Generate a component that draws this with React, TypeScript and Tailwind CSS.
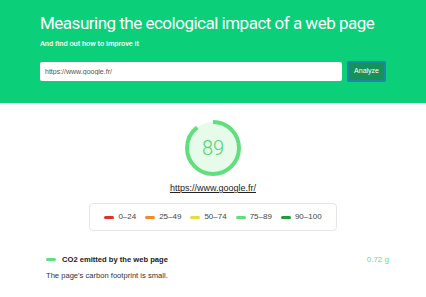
const LEGEND = [
  { label: '0–24', color: 'bg-[#e0312c]' },
  { label: '25–49', color: 'bg-[#f28a2e]' },
  { label: '50–74', color: 'bg-[#e8dc3a]' },
  { label: '75–89', color: 'bg-[#5fe07c]' },
  { label: '90–100', color: 'bg-[#1e9e3a]' },
]

function ScoreGauge({ score }: { score: number }) {
  const r = 26
  const c = 2 * Math.PI * r
  return (
    <div className="relative w-[58px] h-[58px]">
      <svg width="58" height="58" viewBox="0 0 58 58" className="-rotate-90">
        <circle cx="29" cy="29" r={r} fill="#e6fbe9" />
        <circle
          cx="29"
          cy="29"
          r={r}
          fill="none"
          stroke="#5fe07c"
          strokeWidth="4"
          strokeDasharray={`${(c * score) / 100} ${c}`}
        />
      </svg>
      <div className="absolute inset-0 flex items-center justify-center text-[20px] font-light text-[#4fd46d] font-['Roboto',sans-serif]">
        {score}
      </div>
    </div>
  )
}

export default function App() {
  return (
    <div className="w-[426px] h-[297px] bg-white overflow-hidden font-['Liberation_Sans',sans-serif]">
      <header className="bg-[#0bcf79] h-[103px] px-[40px] pt-[11px] font-['Roboto',sans-serif]">
        <h1 className="text-white text-[17px] tracking-[-0.5px] leading-[24px] whitespace-nowrap">Measuring the ecological impact of a web page</h1>
        <p className="text-white text-[7.4px] font-medium mt-[4px] leading-[10px]">And find out how to improve it</p>
        <div className="flex items-center mt-[12px] gap-[5px] font-['Liberation_Sans',sans-serif]">
          <input
            readOnly
            value="https://www.google.fr/"
            className="w-[306px] h-[19px] bg-white rounded-[2px] px-[5px] text-[7px] text-[#555] outline-none"
          />
          <button className="h-[21px] px-[5px] bg-[#15915a] border-2 border-[#1e86a6] rounded-[2px] text-white text-[7px]">
            Analyze
          </button>
        </div>
      </header>

      <div className="flex flex-col items-center pt-[16px]">
        <ScoreGauge score={89} />
        <a className="mt-[5px] text-[9px] text-[#222] underline leading-[12px]">https://www.google.fr/</a>
        <div className="mt-[9px] w-[248px] h-[28px] border border-[#e6e6e6] rounded-[4px] flex items-center justify-center gap-[9px]">
          {LEGEND.map((l) => (
            <div key={l.label} className="flex items-center gap-[4px]">
              <span className={`w-[10px] h-[3px] rounded-full ${l.color}`} />
              <span className="text-[8px] text-[#444]">{l.label}</span>
            </div>
          ))}
        </div>
      </div>

      <div className="pl-[46px] pr-[37px] mt-[23px]">
        <div className="flex items-center justify-between">
          <div className="flex items-center gap-[6px]">
            <span className="w-[10px] h-[3px] rounded-full bg-[#5fe07c]" />
            <span className="text-[7.6px] font-bold text-[#222]">CO2 emitted by the web page</span>
          </div>
          <span className="text-[8px] text-[#5fe07c]">0.72 g</span>
        </div>
        <p className="text-[7.6px] text-[#333] mt-[4px]">The page's carbon footprint is small.</p>
      </div>
    </div>
  )
}
